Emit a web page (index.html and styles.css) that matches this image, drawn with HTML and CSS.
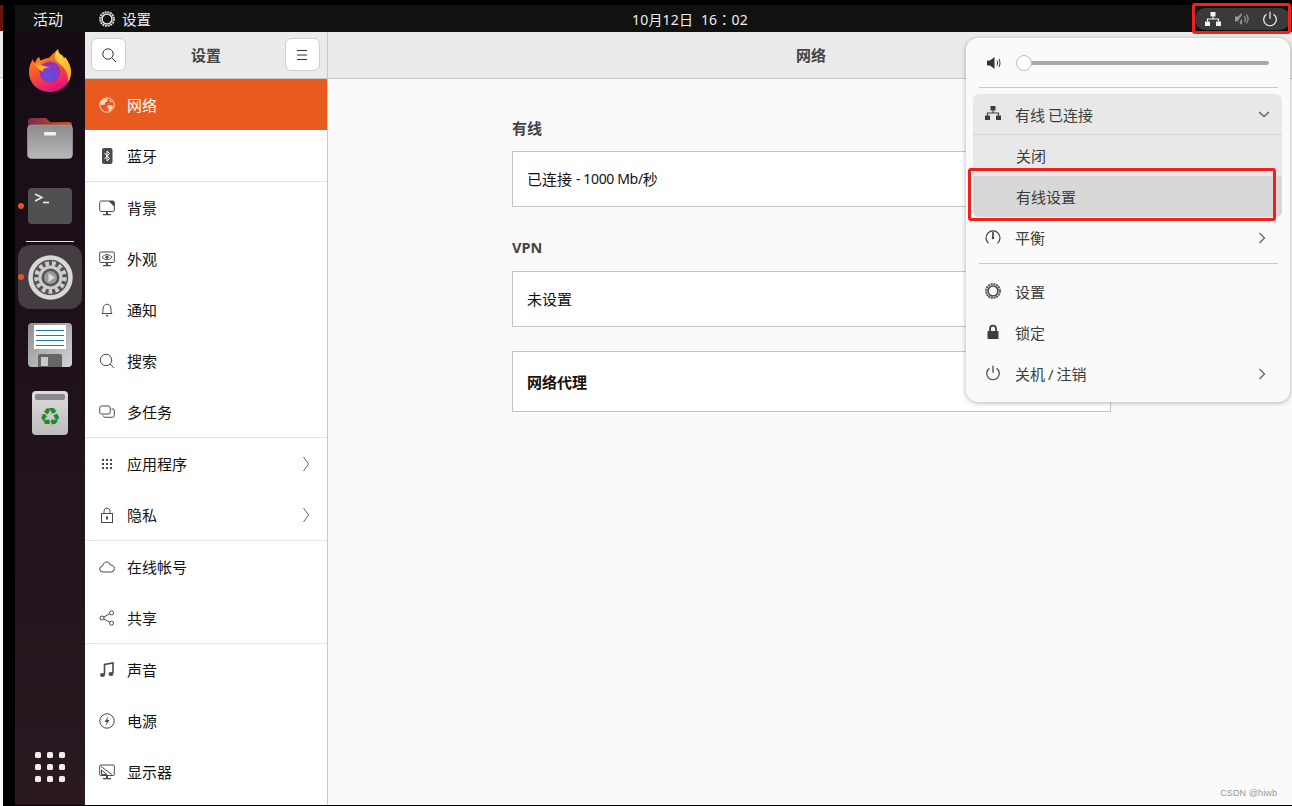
FILE: index.html
```html
<!DOCTYPE html>
<html lang="zh-CN">
<head>
  <meta charset="UTF-8" />
  <title>设置 - 网络</title>
  <link rel="stylesheet" href="styles.css">
</head>
<body>
  <div class="screen">
    <div class="edge">
      <div class="edge-red"></div>
      <div class="edge-head"></div>
    </div>

    <div class="desktop">
      <div class="topbar">
        <div class="top-left">
          <span class="activities">活动</span>
          <svg class="ico gear-ico" viewBox="0 0 16 16"><circle cx="8" cy="8" r="7.100" stroke-width="1.500" stroke-dasharray="2 .8"/><circle cx="8" cy="8" r="6" stroke-width=".8" opacity=".55"/><circle cx="8" cy="8" r="4.900" stroke-width="1.300"/></svg>
          <span class="app-name">设置</span>
        </div>
        <div class="clock">10月12日&nbsp; 16<span class="colon" lang="zh-TW">：</span>02</div>
        <div class="status-pill">
          <svg class="ico" viewBox="0 0 16 16"><path class="fill" d="M5.500 1h5v4.500h-5zM0 10.500h5V15H0zM11 10.500h5V15h-5z"/><path d="M8 5.500V8M2.500 10.500V8h11v2.500"/></svg>
          <svg class="ico mute" viewBox="0 0 16 16"><path class="fill" d="M1 5.500h3L8 2v12L4 10.500H1z"/><path d="M10.500 5c1 1.800 1 4.200 0 6M12.500 3.500c1.800 2.600 1.800 6.400 0 9"/><path stroke="#3a3a3a" stroke-width="2.200" d="M2 15L11 1"/></svg>
          <svg class="ico power" viewBox="0 0 16 16"><path d="M4.500 3.200a6.300 6.300 0 1 0 7 0M8 .8v7"/></svg>
        </div>
      </div>

      <div class="workspace">
        <nav class="dock">
          <div class="dock-item">
            <svg width="42" height="43" viewBox="0 0 42 43">
              <defs>
                <linearGradient id="foxBody" x1="0" y1="0" x2="0.4" y2="1"><stop offset="0" stop-color="#ff9a1f"/><stop offset=".55" stop-color="#f9572c"/><stop offset="1" stop-color="#e3147a"/></linearGradient>
                <linearGradient id="foxTop" x1="0" y1="0" x2="1" y2="1"><stop offset="0" stop-color="#ffe14a"/><stop offset="1" stop-color="#ffa51c"/></linearGradient>
                <radialGradient id="foxGlobe" cx=".45" cy=".65" r=".7"><stop offset="0" stop-color="#5a52e0"/><stop offset="1" stop-color="#a02ab8"/></radialGradient>
              </defs>
              <path d="M10 8c1 2 1 3 2 4 2-2 5-3 8-3 2-3 5-5 9-9 0 4 3 6 5 7l1 3 1-2c3 4 6 9 6 15 0 11-9 20-21 20S0 34 0 23c0-6 2-10 4-13 0 2 1 3 2 4 1-3 2-5 4-6z" fill="url(#foxBody)"/>
              <path d="M29 0c0 4 3 6 5 7l1 3 1-2c3 4 6 9 6 15 0 4-1 7-3 10 0-8-2-13-6-16-4-4-8-6-7-10 0-3 2-5 3-7z" fill="url(#foxTop)"/>
              <circle cx="21" cy="23" r="10.500" fill="url(#foxGlobe)"/>
              <path d="M4 14c2 1 3 1 4 0 2-1 3-3 6-3-1 2-3 3-3 4 2 2 6 2 10 3-4 1-7 2-7 5-4-2-8-5-10-9z" fill="#ff8a1a"/>
              <path d="M7 16c3 0 7 1 11 2.500-3 0-5 1-6 3-2-1-4-3-5-5.500z" fill="#ffc03a"/>
            </svg>
          </div>
          <div class="dock-item">
            <svg width="46" height="42" viewBox="0 0 46 42">
              <defs>
                <linearGradient id="folderBack" x1="0" y1="0" x2="1" y2="0"><stop offset="0" stop-color="#7a2c4c"/><stop offset="1" stop-color="#d2501f"/></linearGradient>
                <linearGradient id="folderFront" x1="0" y1="0" x2="0" y2="1"><stop offset="0" stop-color="#8c8c8c"/><stop offset="1" stop-color="#b9b9b9"/></linearGradient>
              </defs>
              <path d="M1 14V4c0-2 1-3 3-3h15l4 4h19c2 0 3 1 3 3v8z" fill="url(#folderBack)"/>
              <rect x="0.500" y="8" width="45" height="33.500" rx="4" fill="url(#folderFront)" stroke="#aaa" stroke-width=".6"/>
              <rect x="17" y="15" width="12" height="3.500" rx="1" fill="#f2f2f2"/>
            </svg>
          </div>
          <div class="dock-item">
            <svg width="44" height="36" viewBox="0 0 44 36">
              <rect width="44" height="36" rx="4" fill="#505050"/>
              <path d="M7 6l7 3.500-7 3.500" fill="none" stroke="#f0f0f0" stroke-width="1.400"/>
              <path d="M15 14.500h6" stroke="#f0f0f0" stroke-width="1.600"/>
            </svg>
            <i class="run-dot"></i>
          </div>
          <div class="dock-sep"></div>
          <div class="dock-item dock-active">
            <svg width="45" height="45" viewBox="0 0 45 45">
              <circle cx="22.500" cy="22.500" r="20" fill="#585455" stroke="#d8d8d8" stroke-width="4.500"/>
              <circle cx="22.500" cy="22.500" r="14" fill="none" stroke="#cdcdcd" stroke-width="4.500" stroke-dasharray="3.700 3"/>
              <circle cx="22.500" cy="22.500" r="10.500" fill="#585455" stroke="#cdcdcd" stroke-width="3"/>
              <circle cx="22.500" cy="22.500" r="6.500" fill="#9a9899"/>
              <path d="M20.500 18l6.500 4.500-6.500 4.500z" fill="#dcdcdc"/>
            </svg>
            <i class="run-dot"></i>
          </div>
          <div class="dock-item">
            <svg width="44" height="44" viewBox="0 0 44 44">
              <defs><linearGradient id="floppy" x1="0" y1="0" x2="1" y2="1"><stop offset="0" stop-color="#8e8e8e"/><stop offset="1" stop-color="#d4d4d4"/></linearGradient></defs>
              <rect width="44" height="44" rx="4" fill="url(#floppy)"/>
              <rect x="6" y="2" width="32" height="24" fill="#fff"/>
              <path d="M8 7.500h28M8 12.500h28M8 17.500h28M8 22.500h28" stroke="#1a7ab0" stroke-width="1"/>
              <path d="M10 44V33q0-2 2-2h20q2 0 2 2v11z" fill="#666"/>
              <rect x="13" y="34" width="7" height="9" fill="#c9c9c9"/>
            </svg>
          </div>
          <div class="dock-item">
            <div class="trash"><span class="trash-lid"></span><span class="trash-mark">♻</span></div>
          </div>
          <div class="dock-apps">
            <i></i><i></i><i></i><i></i><i></i><i></i><i></i><i></i><i></i>
          </div>
        </nav>

        <aside class="sidebar">
          <div class="side-head">
            <button class="head-btn"><svg class="ico thin" viewBox="0 0 16 16"><circle cx="7" cy="7" r="5.200"/><path d="M11 11l4 4"/></svg></button>
            <div class="head-title">设置</div>
            <button class="head-btn"><svg class="ico thin" viewBox="0 0 16 16"><path d="M3 3.500h10M3 8h10M3 12.500h10"/></svg></button>
          </div>
          <div class="side-list">
            <div class="side-row selected">
              <svg class="ico" viewBox="0 0 16 16"><circle cx="8" cy="8" r="7.200"/><path class="fill" d="M4 2.500l3-1 2 1-1 2-2 1v2l-3 .5-2-1c0-2 1-4 3-4.500zM9 8l4 .5 1 1.500-2 3-2 1.500-.5-3L8 9.500zM10.500 2.500l3 2.500-2.500 0z"/></svg>
              <span>网络</span>
            </div>
            <div class="side-row">
              <svg class="ico" viewBox="0 0 16 16"><rect class="fill" x="3" y="0" width="10.500" height="16" rx="2"/><path stroke="#fff" d="M5.500 5l5 5.500L8 13V3l2.500 2.500-5 5.500"/></svg>
              <span>蓝牙</span>
            </div>
            <div class="side-row">
              <svg class="ico" viewBox="0 0 16 16"><rect x="0.700" y="1" width="14.600" height="10.500" rx="1.500"/><path class="fill" d="M9.500 1h5l1 1v5zM7 11.500h2V14H7zM4 14h8v1.300H4z"/></svg>
              <span>背景</span>
            </div>
            <div class="side-row">
              <svg class="ico" viewBox="0 0 16 16"><rect x="0.700" y="1" width="14.600" height="10.500" rx="1"/><path d="M3 6.200c3-3.400 7-3.400 10 0-3 3.400-7 3.400-10 0z"/><circle class="fill" cx="8" cy="6.200" r="1.600"/><path class="fill" d="M7 11.500h2V14H7zM4 14h8v1.300H4z"/></svg>
              <span>外观</span>
            </div>
            <div class="side-row">
              <svg class="ico" viewBox="0 0 16 16"><path d="M3 11.500c1-1 1-2 1-4.500 0-3 2-4.800 4-4.800s4 1.800 4 4.800c0 2.500 0 3.500 1 4.500z"/><path class="fill" d="M6.500 13h3L8 15z"/></svg>
              <span>通知</span>
            </div>
            <div class="side-row">
              <svg class="ico" viewBox="0 0 16 16"><circle cx="7" cy="7" r="5.700"/><path d="M11 11l4 4"/></svg>
              <span>搜索</span>
            </div>
            <div class="side-row">
              <svg class="ico" viewBox="0 0 16 16"><rect x="0.700" y="2" width="10.500" height="8" rx="2"/><path d="M12.500 5h1.500q1.300 0 1.300 1.300v5q0 2-2 2H6q-1.500 0-2-2"/></svg>
              <span>多任务</span>
            </div>
            <div class="side-line"></div>
            <div class="side-row">
              <svg class="ico" viewBox="0 0 16 16"><path class="fill" d="M3 3h2v2H3zM7 3h2v2H7zM11 3h2v2h-2zM3 7h2v2H3zM7 7h2v2H7zM11 7h2v2h-2zM3 11h2v2H3zM7 11h2v2H7zM11 11h2v2h-2z"/></svg>
              <span>应用程序</span>
              <svg class="chev" viewBox="0 0 8 16"><path d="M1.500 1l5 7-5 7"/></svg>
            </div>
            <div class="side-row">
              <svg class="ico" viewBox="0 0 16 16"><rect x="2.500" y="6.500" width="11" height="9"/><path d="M5 6.500V4.500c0-4.500 6-4.500 6 0v2"/><rect class="fill" x="7" y="9.500" width="2" height="3"/></svg>
              <span>隐私</span>
              <svg class="chev" viewBox="0 0 8 16"><path d="M1.500 1l5 7-5 7"/></svg>
            </div>
            <div class="side-line"></div>
            <div class="side-row">
              <svg class="ico" viewBox="0 0 16 16"><path d="M4 13q-3.400 0-3.400-3 0-2.600 2.900-3C4.300 4 6.500 2.500 8.500 3q2 .5 2.800 3.100 4.100 0 4.100 3.500 0 3.400-3.400 3.400z"/></svg>
              <span>在线帐号</span>
            </div>
            <div class="side-row">
              <svg class="ico" viewBox="0 0 16 16"><circle cx="3" cy="8" r="2"/><circle cx="12.500" cy="2.800" r="2"/><circle cx="12.500" cy="13.200" r="2"/><path d="M4.800 7l6-3.200M4.800 9l6 3.200"/></svg>
              <span>共享</span>
            </div>
            <div class="side-line"></div>
            <div class="side-row">
              <svg class="ico" viewBox="0 0 16 16"><path d="M5.500 12.500V2.500L14 1v10" stroke-width="1.600"/><ellipse class="fill" cx="3.500" cy="13" rx="2.500" ry="2"/><ellipse class="fill" cx="12" cy="12" rx="2.500" ry="2"/></svg>
              <span>声音</span>
            </div>
            <div class="side-row">
              <svg class="ico" viewBox="0 0 16 16"><circle cx="8" cy="8" r="7.200"/><path class="fill" d="M9.500 3L5.500 9h2.300l-1.300 4 4-6H8.200z"/></svg>
              <span>电源</span>
            </div>
            <div class="side-row">
              <svg class="ico" viewBox="0 0 16 16"><rect x="0.700" y="1" width="14.600" height="10.500" rx="1"/><path d="M2 2.500l11 8M2.500 6v4.500H8z"/><path class="fill" d="M7 11.500h2V14H7zM4 14h8v1.300H4z"/></svg>
              <span>显示器</span>
            </div>
          </div>
        </aside>

        <main class="content">
          <div class="content-head">网络</div>
          <div class="panel">
            <div class="group-label">有线</div>
            <div class="card">已连接 <span class="latin">- 1000 Mb/</span>秒</div>
            <div class="group-label vpn">VPN</div>
            <div class="card">未设置</div>
            <div class="card card-proxy">网络代理</div>
          </div>
          <div class="watermark">CSDN @hiwb</div>
        </main>
      </div>
    </div>

    <div class="popover">
      <div class="volume">
        <svg class="ico" viewBox="0 0 16 16"><path class="fill" d="M1 5.500h3L8.500 2v12L4 10.500H1z"/><path d="M11 5.500c.8 1.500.8 3.500 0 5M13 4c1.300 2.500 1.300 5.500 0 8" stroke-width="1"/></svg>
        <div class="slider"><i class="knob"></i></div>
      </div>
      <div class="pop-line"></div>
      <div class="wired">
        <div class="pop-row wired-head">
          <svg class="ico" viewBox="0 0 16 16"><path class="fill" d="M5.500 1h5v4.500h-5zM0 10.500h5V15H0zM11 10.500h5V15h-5z"/><path d="M8 5.500V8M2.500 10.500V8h11v2.500"/></svg>
          <span>有线 已连接</span>
          <svg class="pop-chev" viewBox="0 0 12 12"><path d="M1 4l5 4.500L11 4" stroke-width="1.600"/></svg>
        </div>
        <div class="pop-row sub">关闭</div>
        <div class="pop-row sub hover">有线设置</div>
      </div>
      <div class="pop-row">
        <svg class="ico" viewBox="0 0 16 16"><path d="M3.500 14.300a7 7 0 1 1 9 0"/><path d="M8 3v5" stroke-width="1.600"/><circle class="fill" cx="8" cy="9" r="1.200"/></svg>
        <span>平衡</span>
        <svg class="pop-chev" viewBox="0 0 12 12"><path d="M3.500 1l5 5-5 5" stroke-width="1.300"/></svg>
      </div>
      <div class="pop-line low"></div>
      <div class="pop-row">
        <svg class="ico" viewBox="0 0 16 16"><circle cx="8" cy="8" r="7.100" stroke-width="1.500" stroke-dasharray="2 .8"/><circle cx="8" cy="8" r="6" stroke-width=".8" opacity=".55"/><circle cx="8" cy="8" r="4.900" stroke-width="1.300"/></svg>
        <span>设置</span>
      </div>
      <div class="pop-row">
        <svg class="ico" viewBox="0 0 16 16"><rect class="fill" x="2.500" y="7" width="11" height="8" rx=".5"/><path d="M5 7V4.800c0-4.200 6-4.200 6 0V7" stroke-width="1.800"/></svg>
        <span>锁定</span>
      </div>
      <div class="pop-row">
        <svg class="ico" viewBox="0 0 16 16"><path d="M4.500 3.200a6.300 6.300 0 1 0 7 0M8 .8v7"/></svg>
        <span>关机 / 注销</span>
        <svg class="pop-chev" viewBox="0 0 12 12"><path d="M3.500 1l5 5-5 5" stroke-width="1.300"/></svg>
      </div>
    </div>

    <div class="mark mark-status"></div>
    <div class="mark mark-item"></div>
  </div>
</body>
</html>
```

FILE: styles.css
```css
* {
  box-sizing: border-box;
}

html, body {
  height: 100%;
  margin: 0;
  overflow: hidden;
  background: #000;
  font-family: "Noto Sans", "Noto Sans CJK SC", sans-serif;
  font-size: 15px;
}

.screen {
  position: relative;
  display: flex;
  height: 806px;
  overflow: hidden;
  background: #000;
}

.edge {
  width: 3px;
  margin-right: 12px;
  flex: none;
  background: #fafafa;
}

.edge-red {
  height: 31px;
  background: #6a130c;
  border-top: 5px solid #000;
}

.edge-head {
  height: 47px;
  background: #ebebeb;
  border-bottom: 1px solid #c4c4c4;
}

.desktop {
  flex: 1;
  display: flex;
  flex-direction: column;
  padding-top: 5px;
  padding-bottom: 1px;
  min-width: 0;
}

/* top bar */
.topbar {
  height: 27px;
  flex: none;
  display: flex;
  align-items: center;
  background: #111;
  color: #eee;
}

.top-left {
  width: 617px;
  display: flex;
  align-items: center;
  padding-left: 18px;
}

.activities {
  margin-right: 36px;
}

.gear-ico {
  margin-right: 7px;
}

.app-name {
  font-size: 14.5px;
}

.clock {
  font-size: 14px;
  letter-spacing: 0.2px;
  white-space: nowrap;
}

.colon {
  font-family: "Noto Sans CJK TC", sans-serif;
}

.status-pill {
  margin-left: auto;
  margin-right: 2px;
  width: 95px;
  height: 22px;
  display: flex;
  align-items: center;
  gap: 13px;
  padding-left: 10px;
  background: #3a3a3a;
  border-radius: 10px;
  color: #f4f4f4;
}

.mute {
  opacity: 0.5;
}

.power {
  margin-left: -1px;
}

/* shared icon styles */
.ico {
  width: 16px;
  height: 16px;
  flex: none;
  fill: none;
  stroke: currentColor;
  stroke-width: 1.2;
}

.ico.thin {
  stroke-width: 1;
}

.ico .fill {
  fill: currentColor;
  stroke: none;
}

.workspace {
  flex: 1;
  display: flex;
  min-height: 0;
}

/* dock */
.dock {
  width: 70px;
  flex: none;
  display: flex;
  flex-direction: column;
  align-items: center;
  padding: 4px 0 23px;
  background: linear-gradient(#160b15, #2a1921);
}

.dock-item {
  position: relative;
  width: 64px;
  height: 68px;
  flex: none;
  display: flex;
  align-items: center;
  justify-content: center;
}

.dock-item svg {
  display: block;
}

.dock-sep {
  width: 48px;
  height: 1px;
  margin: 1px 0 3px;
  flex: none;
  background: #ddd;
}

.dock-active {
  height: 64px;
  margin-bottom: 2px;
  background: #453d42;
  border-radius: 12px;
}

.run-dot {
  position: absolute;
  left: 0;
  top: 50%;
  width: 6px;
  height: 6px;
  margin-top: -3px;
  border-radius: 50%;
  background: #e95420;
}

.trash {
  position: relative;
  width: 36px;
  height: 44px;
  display: flex;
  flex-direction: column;
  align-items: center;
  padding-top: 3px;
  background: linear-gradient(#dcdcdc, #bcbcbc);
  border-radius: 4px;
}

.trash-lid {
  width: 30px;
  height: 6px;
  background: #8a8a8a;
  border-radius: 2px;
}

.trash-mark {
  margin-top: 1px;
  font-family: "DejaVu Sans", sans-serif;
  font-size: 24px;
  line-height: 32px;
  color: #23882a;
}

.dock-apps {
  margin-top: auto;
  display: grid;
  grid-template-columns: repeat(3, 6px);
  grid-auto-rows: 6px;
  gap: 6px;
}

.dock-apps i {
  background: #eee;
  border-radius: 1.5px;
}

/* sidebar */
.sidebar {
  width: 243px;
  flex: none;
  display: flex;
  flex-direction: column;
  background: #fff;
  border-right: 1px solid #c8c8c8;
}

.side-head {
  height: 47px;
  flex: none;
  display: flex;
  align-items: center;
  justify-content: space-between;
  padding: 0 7px 1px 6px;
  background: #ebebeb;
  border-bottom: 1px solid #c8c8c8;
}

.head-btn {
  width: 35px;
  height: 33px;
  display: flex;
  align-items: center;
  justify-content: center;
  padding: 0;
  background: #fff;
  border: 1px solid #cfcfcf;
  border-radius: 6px;
  color: #333;
}

.head-title {
  margin-left: 1px;
  font-weight: 700;
  color: #444;
}

.side-row {
  height: 51px;
  display: flex;
  align-items: center;
  gap: 12px;
  padding: 0 17px 0 14px;
  color: #111;
}

.side-row .ico {
  color: #4a4a4a;
  stroke-width: 1;
}

.side-row.selected {
  background: #e95a1e;
  color: #fff;
}

.side-row.selected .ico {
  color: #ffd9c8;
}

.side-line {
  height: 1px;
  background: #e2e2e2;
}

.side-row:nth-child(2) {
  border-bottom: 1px solid #e2e2e2;
  height: 52px;
}

.chev {
  margin-left: auto;
  width: 8px;
  height: 16px;
  fill: none;
  stroke: #666;
  stroke-width: 1;
}

/* main panel */
.content {
  position: relative;
  flex: 1;
  min-width: 0;
  background: #fafafa;
}

.content-head {
  height: 47px;
  padding-bottom: 1px;
  display: flex;
  align-items: center;
  justify-content: center;
  padding-left: 2px;
  background: #ebebeb;
  border-bottom: 1px solid #c8c8c8;
  font-weight: 700;
  color: #444;
}

.panel {
  width: 599px;
  margin-left: 184px;
  padding-top: 38px;
}

.group-label {
  height: 22px;
  line-height: 22px;
  margin-bottom: 12px;
  font-weight: 700;
  color: #444;
}

.group-label.vpn {
  margin-top: 29px;
  margin-bottom: 13px;
  font-size: 14.5px;
}

.card {
  height: 56px;
  display: flex;
  align-items: center;
  padding: 0 14px 2px;
  background: #fff;
  border: 1px solid #c4c4c4;
  color: #111;
  white-space: pre;
}

.latin {
  font-size: 14px;
  letter-spacing: -0.35px;
}

.card-proxy {
  height: 61px;
  margin-top: 24px;
  padding-bottom: 0;
  font-weight: 700;
}

.watermark {
  position: absolute;
  right: 15px;
  bottom: 7px;
  font-family: "Liberation Sans", sans-serif;
  font-size: 9.2px;
  color: #999;
}

/* system menu */
.popover {
  position: absolute;
  left: 966px;
  top: 38px;
  width: 324px;
  height: 364px;
  padding: 0 8px 0 7px;
  background: #fafafa;
  border-radius: 12px;
  box-shadow: 0 1px 5px rgba(0, 0, 0, 0.3);
  color: #3d3d3d;
}

.volume {
  height: 49px;
  display: flex;
  align-items: center;
  padding: 1px 13px 0 13px;
  gap: 22px;
  color: #333;
}

.slider {
  position: relative;
  flex: 1;
  height: 4px;
  background: #a9a9a9;
  border-radius: 2px;
}

.knob {
  position: absolute;
  left: -8px;
  top: -6px;
  width: 16px;
  height: 16px;
  background: #fff;
  border: 1px solid #bdbdbd;
  border-radius: 50%;
}

.pop-line {
  height: 1px;
  margin: 0 4px 0 6px;
  background: #c9c9c9;
}

.pop-line.low {
  margin-top: 5px;
  margin-bottom: 7px;
}

.wired {
  margin-top: 6px;
  height: 123px;
  background: #e8e8e8;
  border-radius: 6px;
  overflow: hidden;
}

.pop-row {
  height: 41px;
  display: flex;
  align-items: center;
  gap: 14px;
  padding: 0 14px 0 12px;
  word-spacing: -1px;
}

.pop-row .ico {
  margin-top: -2px;
}

.wired-head {
  height: 41px;
  padding-right: 12px;
  border-bottom: 1px solid #d4d4d4;
}

.pop-row.sub {
  padding-left: 43px;
}

.pop-row.hover {
  background: #d8d8d8;
}

.pop-chev {
  margin-left: auto;
  width: 12px;
  height: 12px;
  fill: none;
  stroke: #666;
}

/* red annotation boxes */
.mark {
  position: absolute;
  border: 3px solid #f0201a;
  border-radius: 3px;
}

.mark-status {
  left: 1192px;
  top: 3px;
  width: 99px;
  height: 31px;
}

.mark-item {
  left: 968px;
  top: 168px;
  width: 308px;
  height: 53px;
}
```
